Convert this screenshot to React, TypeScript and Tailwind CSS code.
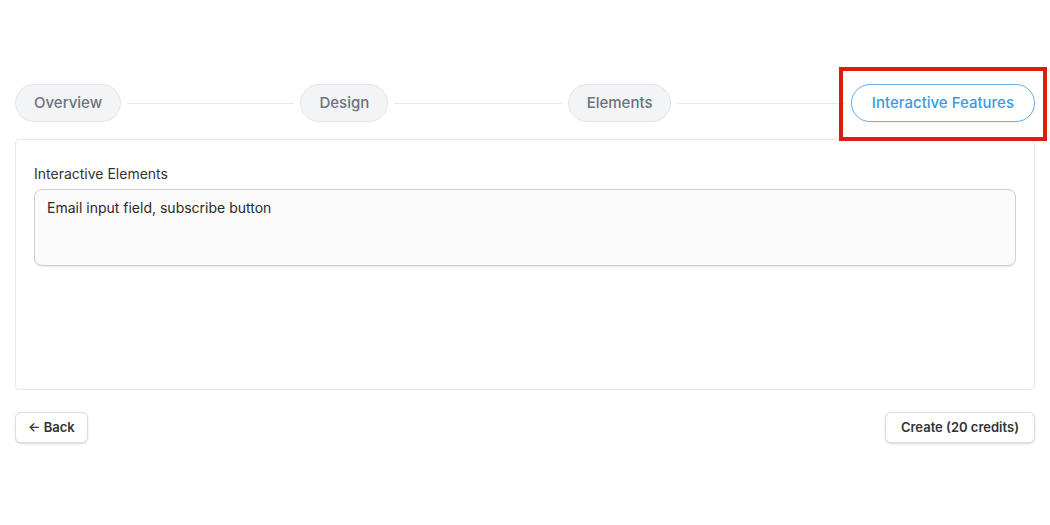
import React from "react";

const STEPS = ["Overview", "Design", "Elements", "Interactive Features"];

const StepPill = ({ label, active }: { label: string; active: boolean }) => {
  return (
    <div
      className={`shrink-0 h-[38px] flex items-center rounded-full border text-[15px] font-medium ${
        active
          ? "px-[20px] bg-white border-[#6aaee8] text-[#3d9ae0] shadow-[0_1px_2px_rgba(0,0,0,0.06)]"
          : "px-[18px] bg-[#f3f4f6] border-[#e3e5e8] text-[#6b7280]"
      }`}
    >
      {label}
    </div>
  );
};

const App = () => {
  return (
    <div
      className="w-[1050px] h-[525px] bg-white relative"
      style={{ fontFamily: "Inter, 'Noto Sans', sans-serif" }}
    >
      <div className="px-[15px] pt-[84px]">
        <div className="flex items-center">
          {STEPS.map((step, i) => (
            <React.Fragment key={step}>
              <StepPill label={step} active={i === STEPS.length - 1} />
              {i < STEPS.length - 1 && (
                <div className="flex-1 h-px bg-[#e5e7eb] mx-[6px]" />
              )}
            </React.Fragment>
          ))}
        </div>

        <div className="mt-[17px] h-[251px] border border-[#e8e8e8] rounded-[4px] px-[18px] pt-[25px]">
          <div className="text-[14px] text-[#333] leading-[18px]">
            Interactive Elements
          </div>
          <div className="mt-[6px] h-[77px] rounded-[8px] border border-[#cfcfcf] bg-[#fbfbfb] px-[12px] pt-[8px] text-[14px] leading-[20px] text-[#2a2a2a] shadow-[0_1px_1px_rgba(0,0,0,0.08)]">
            Email input field, subscribe button
          </div>
        </div>

        <div className="mt-[22px] flex justify-between">
          <button className="h-[31px] px-[12px] rounded-[6px] border border-[#dedede] bg-white text-[13px] font-semibold text-[#333] shadow-[0_1px_2px_rgba(0,0,0,0.15)]">
            ← Back
          </button>
          <button className="h-[31px] px-[15px] rounded-[6px] border border-[#dedede] bg-white text-[13px] font-semibold text-[#333] shadow-[0_1px_2px_rgba(0,0,0,0.15)]">
            Create (20 credits)
          </button>
        </div>
      </div>

      <div className="absolute left-[839px] top-[67px] w-[208px] h-[74px] border-[4px] border-[#e01a0f] pointer-events-none" />
    </div>
  );
};

export default App;
